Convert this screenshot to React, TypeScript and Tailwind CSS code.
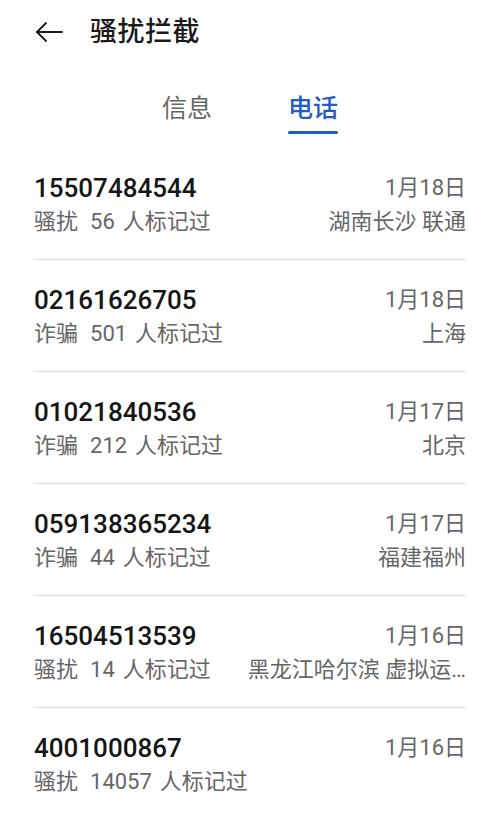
const rows = [
  { num: "15507484544", tag: "骚扰", count: "56", date: "1月18日", loc: "湖南长沙 联通" },
  { num: "02161626705", tag: "诈骗", count: "501", date: "1月18日", loc: "上海" },
  { num: "01021840536", tag: "诈骗", count: "212", date: "1月17日", loc: "北京" },
  { num: "059138365234", tag: "诈骗", count: "44", date: "1月17日", loc: "福建福州" },
  { num: "16504513539", tag: "骚扰", count: "14", date: "1月16日", loc: "黑龙江哈尔滨 虚拟运…" },
  { num: "4001000867", tag: "骚扰", count: "14057", date: "1月16日", loc: "" },
];

function BackArrow() {
  return (
    <svg width="30" height="24" viewBox="0 0 30 24" fill="none" stroke="#1a1a1a" strokeWidth="1.8" strokeLinecap="round" strokeLinejoin="round">
      <path d="M3 12 H28" />
      <path d="M12 3 L3 12 L12 21" />
    </svg>
  );
}

export default function App() {
  return (
    <div
      className="min-h-[832px] w-[500px] overflow-hidden bg-white"
      style={{ fontFamily: 'Roboto, "Noto Sans CJK SC", sans-serif' }}
    >
      <header className="flex h-[64px] items-center pl-[34px]">
        <BackArrow />
        <h1 className="ml-[26px] text-[27px] font-medium tracking-[0.5px] text-[#1a1a1a]">骚扰拦截</h1>
      </header>

      <div className="flex h-[84px] justify-center gap-[76px] pt-[28px]">
        <div className="flex flex-col items-center">
          <span className="text-[25px] leading-[34px] text-[#666]">信息</span>
        </div>
        <div className="flex flex-col items-center">
          <span className="text-[25px] font-medium leading-[34px] text-[#1f5cc4]">电话</span>
          <div className="mt-[5px] h-[3px] w-[50px] rounded-full bg-[#1f5cc4]" />
        </div>
      </div>

      <ul className="px-[34px]">
        {rows.map((r, i) => (
          <li
            key={r.num}
            className={`flex h-[112px] justify-between pt-[25px] ${i < rows.length - 1 ? "border-b border-[#dcdcdc]" : ""}`}
          >
            <div className="flex shrink-0 flex-col">
              <span className="text-[26px] font-medium leading-[30px] text-[#161616]">{r.num}</span>
              <span className="mt-[4px] text-[22px] leading-[30px] text-[#666]">
                {r.tag}
                <span className="ml-[12px]">{r.count}</span>
                <span className="ml-[8px]">人标记过</span>
              </span>
            </div>
            <div className="flex min-w-0 flex-col items-end">
              <span className="text-[22px] leading-[30px] text-[#666]">{r.date}</span>
              <span className="mt-[4px] whitespace-nowrap text-[22px] leading-[30px] text-[#666]">{r.loc}</span>
            </div>
          </li>
        ))}
      </ul>
    </div>
  );
}
